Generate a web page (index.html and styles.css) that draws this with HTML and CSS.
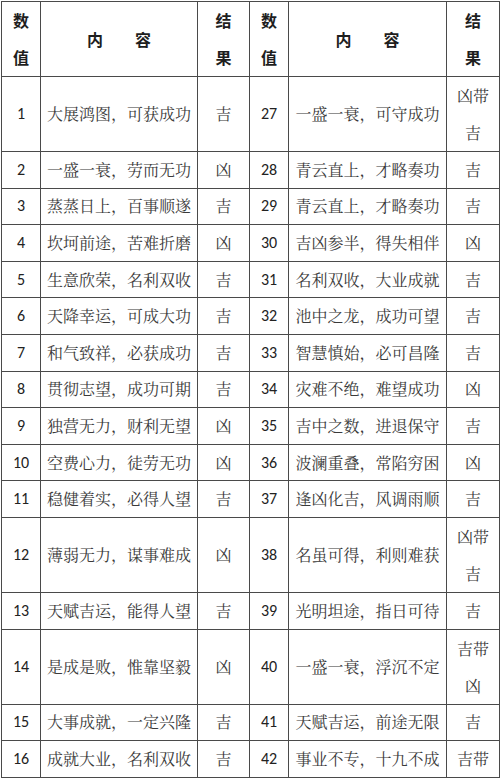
FILE: index.html
```html
<!DOCTYPE html>
<html lang="zh-CN">
<head>
<meta charset="utf-8">
<title>数理吉凶表</title>
<link rel="stylesheet" href="styles.css">
</head>
<body>
<table class="tbl">
  <colgroup>
    <col class="c-num"><col class="c-text"><col class="c-res">
    <col class="c-num"><col class="c-text2"><col class="c-res2">
  </colgroup>
  <thead>
    <tr class="r-head">
      <th class="h">数<br>值</th><th class="h">内　　容</th><th class="h">结<br>果</th>
      <th class="h">数<br>值</th><th class="h">内　　容</th><th class="h">结<br>果</th>
    </tr>
  </thead>
  <tbody>
    <tr class="r2"><td class="n">1</td><td class="t">大展鸿图，可获成功</td><td class="t">吉</td><td class="n">27</td><td class="t">一盛一衰，可守成功</td><td class="t res">凶带<br>吉</td></tr>
    <tr class="r1"><td class="n">2</td><td class="t">一盛一衰，劳而无功</td><td class="t">凶</td><td class="n">28</td><td class="t">青云直上，才略奏功</td><td class="t">吉</td></tr>
    <tr class="r1"><td class="n">3</td><td class="t">蒸蒸日上，百事顺遂</td><td class="t">吉</td><td class="n">29</td><td class="t">青云直上，才略奏功</td><td class="t">吉</td></tr>
    <tr class="r1"><td class="n">4</td><td class="t">坎坷前途，苦难折磨</td><td class="t">凶</td><td class="n">30</td><td class="t">吉凶参半，得失相伴</td><td class="t">凶</td></tr>
    <tr class="r1"><td class="n">5</td><td class="t">生意欣荣，名利双收</td><td class="t">吉</td><td class="n">31</td><td class="t">名利双收，大业成就</td><td class="t">吉</td></tr>
    <tr class="r1"><td class="n">6</td><td class="t">天降幸运，可成大功</td><td class="t">吉</td><td class="n">32</td><td class="t">池中之龙，成功可望</td><td class="t">吉</td></tr>
    <tr class="r1"><td class="n">7</td><td class="t">和气致祥，必获成功</td><td class="t">吉</td><td class="n">33</td><td class="t">智慧慎始，必可昌隆</td><td class="t">吉</td></tr>
    <tr class="r1"><td class="n">8</td><td class="t">贯彻志望，成功可期</td><td class="t">吉</td><td class="n">34</td><td class="t">灾难不绝，难望成功</td><td class="t">凶</td></tr>
    <tr class="r1"><td class="n">9</td><td class="t">独营无力，财利无望</td><td class="t">凶</td><td class="n">35</td><td class="t">吉中之数，进退保守</td><td class="t">吉</td></tr>
    <tr class="r1"><td class="n">10</td><td class="t">空费心力，徒劳无功</td><td class="t">凶</td><td class="n">36</td><td class="t">波澜重叠，常陷穷困</td><td class="t">凶</td></tr>
    <tr class="r1"><td class="n">11</td><td class="t">稳健着实，必得人望</td><td class="t">吉</td><td class="n">37</td><td class="t">逢凶化吉，风调雨顺</td><td class="t">吉</td></tr>
    <tr class="r2"><td class="n">12</td><td class="t">薄弱无力，谋事难成</td><td class="t">凶</td><td class="n">38</td><td class="t">名虽可得，利则难获</td><td class="t res">凶带<br>吉</td></tr>
    <tr class="r1"><td class="n">13</td><td class="t">天赋吉运，能得人望</td><td class="t">吉</td><td class="n">39</td><td class="t">光明坦途，指日可待</td><td class="t">吉</td></tr>
    <tr class="r2"><td class="n">14</td><td class="t">是成是败，惟靠坚毅</td><td class="t">凶</td><td class="n">40</td><td class="t">一盛一衰，浮沉不定</td><td class="t res">吉带<br>凶</td></tr>
    <tr class="r1"><td class="n">15</td><td class="t">大事成就，一定兴隆</td><td class="t">吉</td><td class="n">41</td><td class="t">天赋吉运，前途无限</td><td class="t">吉</td></tr>
    <tr class="r1"><td class="n">16</td><td class="t">成就大业，名利双收</td><td class="t">吉</td><td class="n">42</td><td class="t">事业不专，十九不成</td><td class="t">吉带</td></tr>
  </tbody>
</table>
</body>
</html>
```
FILE: styles.css
```css
html, body {
  margin: 0;
  padding: 0;
  background: #ffffff;
}

.tbl {
  border-collapse: collapse;
  table-layout: fixed;
  width: 499px;
  margin: 1px 0 0 1px;
}

.c-num { width: 39px; }
.c-text { width: 157px; }
.c-res { width: 52px; }
.c-text2 { width: 158px; }
.c-res2 { width: 53px; }

.tbl th,
.tbl td {
  border: 1px solid #4a4a4a;
  padding: 0;
  text-align: center;
  vertical-align: middle;
  overflow: hidden;
  white-space: nowrap;
}

.r-head { height: 72.5px; }
.r1 { height: 36.6px; }
.r2 { height: 73.6px; }

.h {
  font-family: "Noto Sans CJK SC", sans-serif;
  font-weight: 700;
  font-size: 16px;
  line-height: 37px;
  color: #1e1e1e;
}

.n {
  font-family: "Carlito", "Lato", "Liberation Sans", sans-serif;
  font-size: 16px;
  line-height: 20px;
  color: #222222;
}

.t {
  font-family: "Noto Serif CJK SC", "Noto Sans CJK SC", serif;
  font-size: 16px;
  line-height: 20px;
  font-weight: 400;
  color: #3a3a3a;
}

.res {
  line-height: 37px;
}
```
